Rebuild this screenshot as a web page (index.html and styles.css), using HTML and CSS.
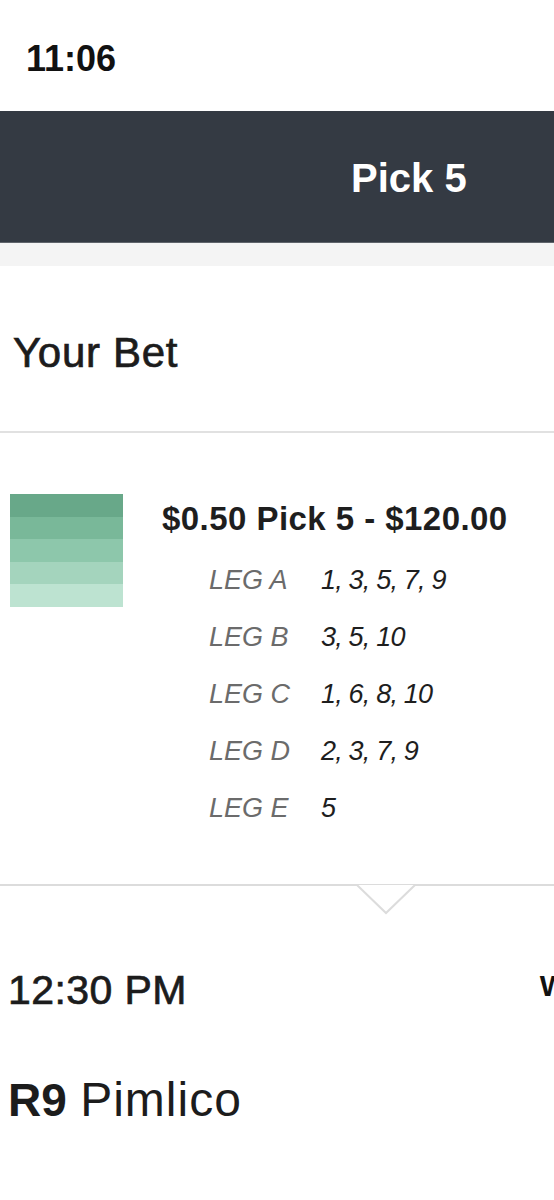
FILE: index.html
```html
<!DOCTYPE html>
<html>
<head>
<meta charset="utf-8">
<link rel="stylesheet" href="styles.css">
</head>
<body>
<div class="status"><span class="clock">11:06</span></div>
<header class="header"><h1 class="title">Pick 5</h1></header>
<div class="band"></div>
<section class="your-bet"><h2 class="your-bet-title">Your Bet</h2></section>
<section class="bet">
  <div class="swatch">
    <div class="stripe s1"></div>
    <div class="stripe s2"></div>
    <div class="stripe s3"></div>
    <div class="stripe s4"></div>
    <div class="stripe s5"></div>
  </div>
  <div class="bet-info">
    <div class="bet-title">$0.50 Pick 5 - $120.00</div>
    <div class="legs">
      <div class="leg"><span class="leg-label">LEG A</span><span class="leg-value">1, 3, 5, 7, 9</span></div>
      <div class="leg"><span class="leg-label">LEG B</span><span class="leg-value">3, 5, 10</span></div>
      <div class="leg"><span class="leg-label">LEG C</span><span class="leg-value">1, 6, 8, 10</span></div>
      <div class="leg"><span class="leg-label">LEG D</span><span class="leg-value">2, 3, 7, 9</span></div>
      <div class="leg"><span class="leg-label">LEG E</span><span class="leg-value">5</span></div>
    </div>
  </div>
</section>
<div class="divider">
  <svg class="notch" width="60" height="32" viewBox="0 0 60 32">
    <polygon points="1,1 30,29 59,1" fill="#ffffff"/>
    <polyline points="1,1 30,29 59,1" fill="none" stroke="#dcdcdc" stroke-width="2"/>
  </svg>
</div>
<section class="race">
  <div class="race-top">
    <span class="race-time">12:30 PM</span>
    <span class="race-tag">W</span>
  </div>
  <div class="race-name"><span class="race-num">R9</span> <span class="race-track">Pimlico</span></div>
</section>
</body>
</html>
```

FILE: styles.css
```css
html, body {
  margin: 0;
  padding: 0;
}
body {
  width: 554px;
  overflow: hidden;
  background: #ffffff;
  font-family: "Liberation Sans", Arial, sans-serif;
  color: #1c1c1c;
}
.status {
  height: 111px;
  box-sizing: border-box;
  padding: 41px 0 0 26px;
}
.clock {
  display: block;
  font-size: 36px;
  line-height: 36px;
  font-weight: 700;
  color: #111;
}
.header {
  height: 132px;
  box-sizing: border-box;
  background: #343a43;
  border-bottom: 1px solid #5f646b;
  display: flex;
  align-items: center;
  padding-left: 351px;
}
.title {
  margin: 0;
  font-size: 40px;
  line-height: 40px;
  font-weight: 700;
  color: #ffffff;
  padding-top: 2px;
}
.band {
  height: 23px;
  background: #f4f4f4;
}
.your-bet {
  height: 167px;
  box-sizing: border-box;
  padding: 66px 0 0 13px;
  border-bottom: 2px solid #e1e1e1;
}
.your-bet-title {
  margin: 0;
  font-size: 42px;
  line-height: 42px;
  font-weight: 400;
  letter-spacing: 0.7px;
  color: #1c1c1c;
  -webkit-text-stroke: 0.7px #1c1c1c;
}
.bet {
  display: flex;
  align-items: flex-start;
  padding: 61px 0 47px 10px;
  gap: 39px;
}
.swatch {
  width: 113px;
  display: flex;
  flex-direction: column;
  flex-shrink: 0;
}
.stripe {
  height: 22.6px;
}
.s1 { background: #68a889; }
.s2 { background: #79b899; }
.s3 { background: #8dc7ab; }
.s4 { background: #a4d4bd; }
.s5 { background: #bde3d1; }
.bet-info {
  padding-top: 8px;
}
.bet-title {
  font-size: 33px;
  line-height: 33px;
  font-weight: 700;
  color: #1e1e1e;
  letter-spacing: 0.45px;
}
.legs {
  margin-top: 17px;
  padding-left: 47px;
}
.leg {
  display: flex;
  height: 57px;
  align-items: center;
  font-size: 27px;
  font-style: italic;
  line-height: 57px;
}
.leg-label {
  width: 112px;
  color: #6b6b6b;
}
.leg-value {
  color: #1e1e1e;
  letter-spacing: -0.8px;
}
.divider {
  position: relative;
  height: 2px;
  background: #dcdcdc;
}
.notch {
  position: absolute;
  left: 356px;
  top: 0;
  display: block;
}
.race {
  padding: 84px 0 0 8px;
}
.race-top {
  display: flex;
  align-items: flex-start;
}
.race-time {
  font-size: 41px;
  line-height: 41px;
  letter-spacing: 0.4px;
  color: #1c1c1c;
  -webkit-text-stroke: 0.7px #1c1c1c;
}
.race-tag {
  margin-left: auto;
  margin-right: -14px;
  margin-top: 1px;
  font-size: 30px;
  line-height: 30px;
  font-weight: 700;
  color: #111;
}
.race-name {
  margin-top: 65px;
  font-size: 48px;
  line-height: 48px;
  color: #1c1c1c;
}
.race-num {
  font-weight: 700;
  font-size: 46px;
}
.race-track {
  letter-spacing: 1px;
}
```
